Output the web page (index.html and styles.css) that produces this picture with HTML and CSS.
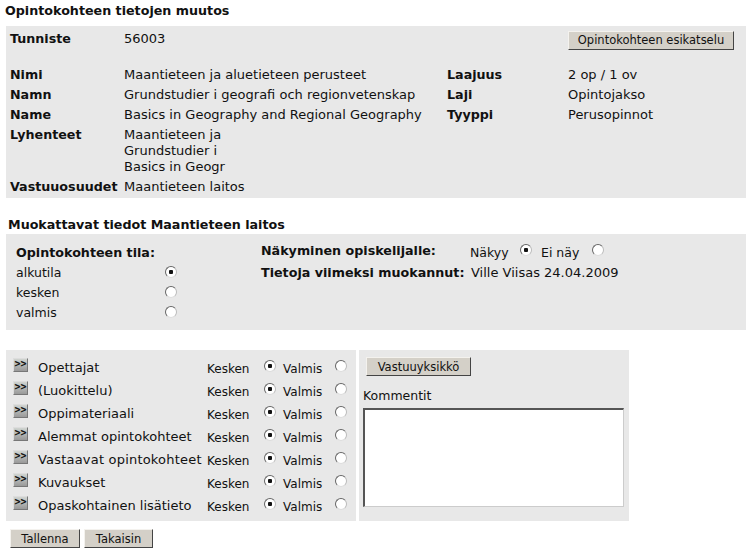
FILE: index.html
```html
<!doctype html>
<html lang="fi">
  <head>
    <meta charset="UTF-8" />
    <title>Opintokohteen tietojen muutos</title>
    <link rel="stylesheet" href="styles.css">
  </head>
  <body>
    <h1 class="page-title">Opintokohteen tietojen muutos</h1>

    <div class="panel info">
      <b>Tunniste</b>
      <span>56003</span>
      <span class="info-preview"><button class="btn btn-preview">Opintokohteen esikatselu</button></span>

      <b>Nimi</b>
      <span>Maantieteen ja aluetieteen perusteet</span>
      <b>Laajuus</b>
      <span>2 op / 1 ov</span>

      <b>Namn</b>
      <span>Grundstudier i geografi och regionvetenskap</span>
      <b>Laji</b>
      <span>Opintojakso</span>

      <b>Name</b>
      <span>Basics in Geography and Regional Geography</span>
      <b>Tyyppi</b>
      <span>Perusopinnot</span>

      <b>Lyhenteet</b>
      <div class="info-short">
        <div>Maantieteen ja</div>
        <div>Grundstudier i</div>
        <div>Basics in Geogr</div>
      </div>

      <b>Vastuuosuudet</b>
      <span class="info-wide">Maantieteen laitos</span>
    </div>

    <h2 class="sub-title">Muokattavat tiedot Maantieteen laitos</h2>

    <div class="panel state">
      <div class="state-left">
        <b class="state-head">Opintokohteen tila:</b>
        <label class="state-row">alkutila <input type="radio" name="tila" checked></label>
        <label class="state-row">kesken <input type="radio" name="tila"></label>
        <label class="state-row">valmis <input type="radio" name="tila"></label>
      </div>
      <div class="state-right">
        <div class="visible-row">
          <b class="state-label">Näkyminen opiskelijalle:</b>
          <span class="visible-yes">Näkyy</span>
          <input type="radio" name="nakyy" checked>
          <span class="visible-no">Ei näy</span>
          <input type="radio" name="nakyy">
        </div>
        <div class="edited-row">
          <b class="state-label">Tietoja viimeksi muokannut:</b>
          <span class="edited-by">Ville Viisas 24.04.2009</span>
        </div>
      </div>
    </div>

    <div class="sections">
      <div class="panel section-list">
        <div class="section-row">
          <button class="more">&gt;&gt;</button><span class="section-name">Opettajat</span>
          <span class="section-k">Kesken</span><input type="radio" name="s1" checked>
          <span class="section-v">Valmis</span><input type="radio" name="s1">
        </div>
        <div class="section-row">
          <button class="more">&gt;&gt;</button><span class="section-name">(Luokittelu)</span>
          <span class="section-k">Kesken</span><input type="radio" name="s2" checked>
          <span class="section-v">Valmis</span><input type="radio" name="s2">
        </div>
        <div class="section-row">
          <button class="more">&gt;&gt;</button><span class="section-name">Oppimateriaali</span>
          <span class="section-k">Kesken</span><input type="radio" name="s3" checked>
          <span class="section-v">Valmis</span><input type="radio" name="s3">
        </div>
        <div class="section-row">
          <button class="more">&gt;&gt;</button><span class="section-name">Alemmat opintokohteet</span>
          <span class="section-k">Kesken</span><input type="radio" name="s4" checked>
          <span class="section-v">Valmis</span><input type="radio" name="s4">
        </div>
        <div class="section-row">
          <button class="more">&gt;&gt;</button><span class="section-name section-name-long">Vastaavat opintokohteet</span>
          <span class="section-k">Kesken</span><input type="radio" name="s5" checked>
          <span class="section-v">Valmis</span><input type="radio" name="s5">
        </div>
        <div class="section-row">
          <button class="more">&gt;&gt;</button><span class="section-name">Kuvaukset</span>
          <span class="section-k">Kesken</span><input type="radio" name="s6" checked>
          <span class="section-v">Valmis</span><input type="radio" name="s6">
        </div>
        <div class="section-row">
          <button class="more">&gt;&gt;</button><span class="section-name">Opaskohtainen lisätieto</span>
          <span class="section-k">Kesken</span><input type="radio" name="s7" checked>
          <span class="section-v">Valmis</span><input type="radio" name="s7">
        </div>
      </div>

      <div class="panel comments">
        <button class="btn btn-unit">Vastuuyksikkö</button>
        <label class="comments-label" for="kommentit">Kommentit</label>
        <textarea id="kommentit" class="comments-box"></textarea>
      </div>
    </div>

    <div class="actions">
      <button class="btn btn-save">Tallenna</button>
      <button class="btn btn-back">Takaisin</button>
    </div>
  </body>
</html>
```

FILE: styles.css
```css
* {
  box-sizing: border-box;
}

body {
  margin: 0;
  font-family: "DejaVu Sans", Verdana, sans-serif;
  font-size: 12.5px;
  color: #111;
  background: #fff;
  overflow: hidden;
}

b {
  font-size: 12.7px;
}

.page-title {
  margin: 0;
  padding: 1px 0 0 5px;
  height: 26px;
  font-size: 12.7px;
  line-height: 20px;
}

.sub-title {
  margin: 0;
  padding: 17px 0 0 8px;
  height: 36px;
  font-size: 12.7px;
  line-height: 20px;
}

.panel {
  background: #e8e8e8;
}

input[type="radio"] {
  appearance: none;
  margin: 0;
  width: 12px;
  height: 12px;
  border-radius: 50%;
  background: #fff;
  border: 1px solid;
  border-color: #666 #bbb #ddd #666;
}

input[type="radio"]:checked {
  background: radial-gradient(circle, #111 0, #111 2px, #fff 2.5px);
}

.btn {
  height: 19px;
  padding: 0;
  font-family: inherit;
  font-size: 11.5px;
  color: #111;
  background: #d4d0c8;
  border: 1px solid;
  border-color: #f4f2ee #444 #444 #f4f2ee;
}

/* info */
.info {
  margin-left: 6px;
  height: 172px;
  padding: 3px 0 0 4px;
  display: grid;
  grid-template-columns: 114px 323px 121px 166px;
  grid-template-rows: 36px 20px 20px 20px 52px 20px;
  font-size: 13px;
  line-height: 20px;
}

.info-preview {
  grid-column: 3 / 5;
  justify-self: end;
  padding-top: 1px;
}

.info-short {
  grid-column: 2 / 5;
  padding-top: 2px;
  line-height: 16px;
}

.info-wide {
  grid-column: 2 / 5;
}

.btn-preview {
  width: 166px;
}

/* state */
.state {
  margin-left: 6px;
  height: 96px;
  display: flex;
}

.state-left {
  width: 255px;
  padding: 9px 0 0 10px;
}

.state-head {
  display: block;
  line-height: 19px;
}

.state-row {
  display: flex;
  justify-content: space-between;
  width: 161px;
  height: 20px;
  align-items: center;
}

.state-right {
  padding-top: 6px;
}

.visible-row,
.edited-row {
  display: flex;
  align-items: center;
  height: 20px;
}

.edited-row {
  margin-top: 2px;
}

.state-label {
  width: 209px;
  white-space: nowrap;
}

.edited-by {
  margin-left: 1px;
  font-size: 13px;
}

.visible-yes {
  width: 50px;
  padding-top: 5px;
}

.visible-no {
  width: 51px;
  margin-left: 9px;
  padding-top: 5px;
}

/* sections */
.sections {
  display: flex;
  gap: 3px;
  margin: 20px 0 0 6px;
  height: 171px;
}

.section-list {
  width: 350px;
  padding-top: 6px;
}

.section-row {
  display: flex;
  align-items: center;
  height: 23px;
  padding-left: 7px;
}

.more {
  display: flex;
  justify-content: center;
  width: 15px;
  height: 14px;
  padding: 0;
  margin-top: -5px;
  font-family: "DejaVu Sans Mono", monospace;
  font-size: 10px;
  font-weight: bold;
  line-height: 10px;
  color: #111;
  background: linear-gradient(#d0d4d0, #999);
  border: 1px solid;
  border-color: #ddd #777 #777 #ddd;
}

.section-name {
  width: 169px;
  margin: -1px 0 0 10px;
  font-size: 13px;
  white-space: nowrap;
}

.section-name-long {
  letter-spacing: 0.2px;
}

.section-k {
  width: 57px;
  padding-top: 3px;
  font-size: 12px;
}

.section-v {
  width: 52px;
  margin-left: 7px;
  padding-top: 3px;
  font-size: 12px;
}

.section-row input {
  margin-top: -3px;
}

.comments {
  width: 270px;
  padding: 7px 0 0 4px;
}

.btn-unit {
  display: block;
  width: 105px;
  margin-left: 3px;
}

.comments-label {
  display: block;
  margin-top: 11px;
  line-height: 18px;
}

.comments-box {
  display: block;
  width: 261px;
  height: 99px;
  margin-top: 3px;
  padding: 0;
  resize: none;
  background: #fff;
  border: 1px solid;
  border-color: #555 #ccc #ccc #555;
  border-width: 2px 1px 1px 2px;
}

/* bottom */
.actions {
  display: flex;
  gap: 4px;
  margin: 8px 0 0 10px;
}

.btn-save {
  width: 70px;
}

.btn-back {
  width: 69px;
}
```
